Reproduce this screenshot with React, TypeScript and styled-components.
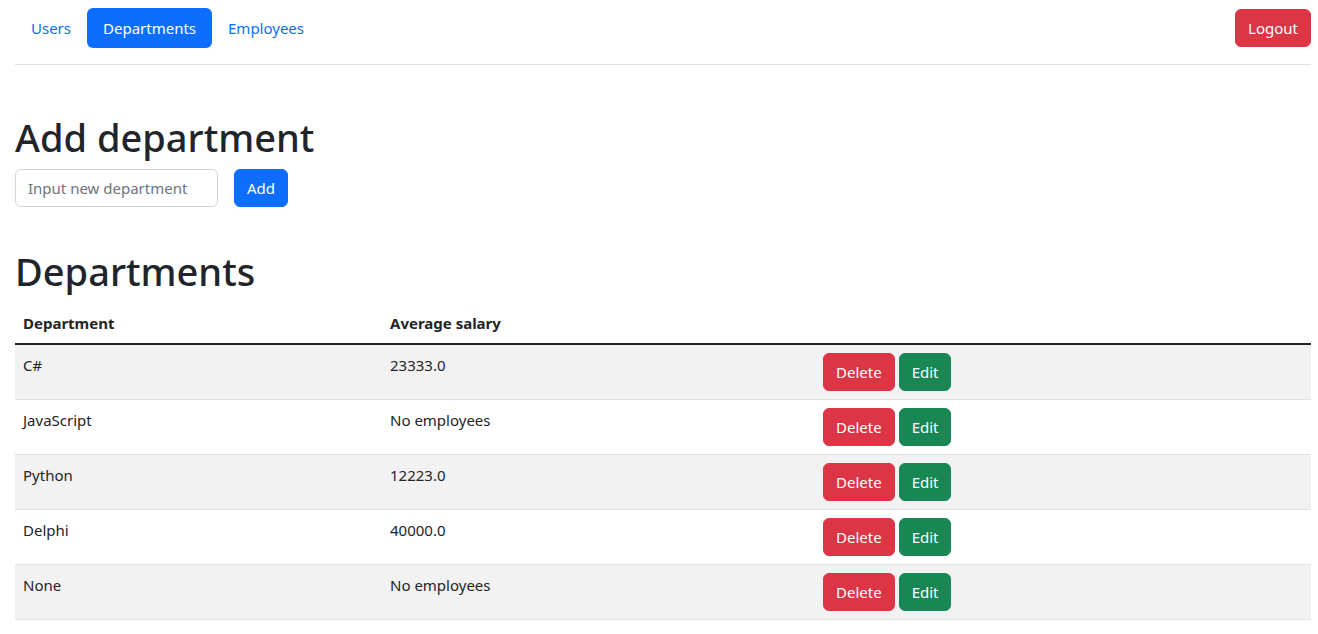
import React from "react";
import styled, { createGlobalStyle, css } from "styled-components";

const Global = createGlobalStyle`
  * { box-sizing: border-box; }
  html, body { margin: 0; padding: 0; background: #fff; }
  body {
    font-family: "Segoe UI", "Noto Sans", "Liberation Sans", sans-serif;
    font-size: 15px;
    line-height: 24px;
    color: #212529;
  }
`;

const Page = styled.div`
  padding: 0 7px 0 15px;
`;

const Header = styled.header`
  display: flex;
  justify-content: space-between;
  align-items: center;
  padding: 8px 0 16px;
  border-bottom: 1px solid #dee2e6;
`;

const Pills = styled.nav`
  display: flex;
`;

const Pill = styled.a<{ $active?: boolean }>`
  display: block;
  padding: 8px 16px;
  border-radius: 6px;
  font-size: 15px;
  line-height: 24px;
  text-decoration: none;
  color: #0d6efd;
  cursor: pointer;
  ${(p) =>
    p.$active &&
    css`
      background: #0d6efd;
      color: #fff;
    `}
`;

const variants = {
  primary: "#0d6efd",
  danger: "#dc3545",
  success: "#198754",
};

const Button = styled.button<{ $variant: keyof typeof variants }>`
  display: inline-block;
  font-family: inherit;
  font-size: 15px;
  line-height: 24px;
  padding: 6px 12px;
  border: 1px solid ${(p) => variants[p.$variant]};
  background: ${(p) => variants[p.$variant]};
  color: #fff;
  border-radius: 6px;
  cursor: pointer;
`;

const Heading = styled.h1<{ $top: number }>`
  font-size: 38px;
  font-weight: 500;
  line-height: 48px;
  margin: ${(p) => p.$top}px 0 8px;
`;

const AddForm = styled.form`
  display: flex;
  gap: 16px;
  align-items: center;
`;

const Input = styled.input`
  width: 203px;
  font-family: inherit;
  font-size: 15px;
  line-height: 24px;
  padding: 6px 12px;
  border: 1px solid #ced4da;
  border-radius: 6px;
  color: #212529;
  &::placeholder { color: #6c757d; }
`;

const Table = styled.table`
  width: 100%;
  border-collapse: collapse;
  table-layout: fixed;
`;

const Th = styled.th<{ $w?: number }>`
  text-align: left;
  font-weight: 700;
  padding: 8px;
  line-height: 24px;
  border-bottom: 2px solid #212529;
  ${(p) => p.$w && css`width: ${p.$w}px;`}
`;

const Row = styled.tr<{ $striped: boolean }>`
  background: ${(p) => (p.$striped ? "#f2f2f2" : "#fff")};
  border-bottom: 1px solid #dee2e6;
`;

const Td = styled.td`
  padding: 8px;
  vertical-align: top;
  line-height: 24px;
`;

const Actions = styled.div`
  display: flex;
  gap: 4px;
`;

const rows = [
  ["C#", "23333.0"],
  ["JavaScript", "No employees"],
  ["Python", "12223.0"],
  ["Delphi", "40000.0"],
  ["None", "No employees"],
];

export default function App() {
  return (
    <Page>
      <Global />
      <Header>
        <Pills>
          <Pill>Users</Pill>
          <Pill $active>Departments</Pill>
          <Pill>Employees</Pill>
        </Pills>
        <Button $variant="danger">Logout</Button>
      </Header>
      <Heading $top={48}>Add department</Heading>
      <AddForm onSubmit={(e) => e.preventDefault()}>
        <Input placeholder="Input new department" />
        <Button $variant="primary">Add</Button>
      </AddForm>
      <Heading $top={40}>Departments</Heading>
      <Table>
        <thead>
          <tr>
            <Th $w={367}>Department</Th>
            <Th $w={433}>Average salary</Th>
            <Th></Th>
          </tr>
        </thead>
        <tbody>
          {rows.map(([d, s], i) => (
            <Row key={d} $striped={i % 2 === 0}>
              <Td>{d}</Td>
              <Td>{s}</Td>
              <Td>
                <Actions>
                  <Button $variant="danger">Delete</Button>
                  <Button $variant="success">Edit</Button>
                </Actions>
              </Td>
            </Row>
          ))}
        </tbody>
      </Table>
    </Page>
  );
}
